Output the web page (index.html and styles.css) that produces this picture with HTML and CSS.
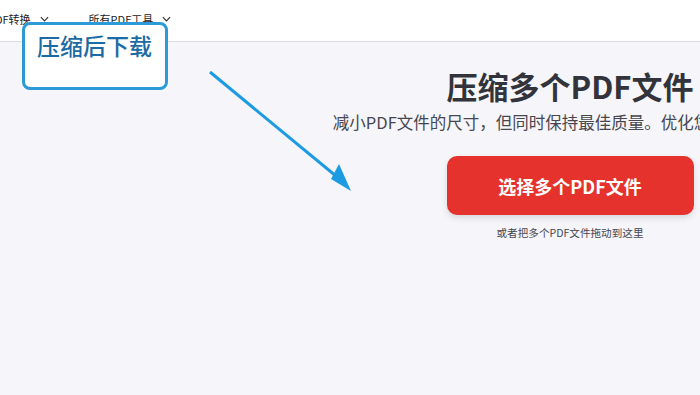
FILE: index.html
```html
<!DOCTYPE html>
<html lang="zh-CN">
<head>
<meta charset="utf-8">
<title>压缩多个PDF文件</title>
<link rel="stylesheet" href="styles.css">
</head>
<body>
<header class="topbar">
  <nav class="nav">
    <a class="nav-item">PDF转换 <svg class="chev" viewBox="0 0 10 6" width="9" height="6"><path d="M1 1l4 4 4-4" fill="none" stroke="#333" stroke-width="1.3"/></svg></a>
    <a class="nav-item">所有PDF工具 <svg class="chev" viewBox="0 0 10 6" width="9" height="6"><path d="M1 1l4 4 4-4" fill="none" stroke="#333" stroke-width="1.3"/></svg></a>
  </nav>
</header>
<main class="hero">
  <h1 class="title">压缩多个PDF文件</h1>
  <p class="subtitle">减小PDF文件的尺寸，但同时保持最佳质量。优化您的PDF文件。</p>
  <button class="upload-btn">选择多个PDF文件</button>
  <p class="drop-hint">或者把多个PDF文件拖动到这里</p>
</main>
<div class="callout">压缩后下载</div>
<svg class="arrow" width="700" height="395" viewBox="0 0 700 395">
  <line x1="210" y1="72" x2="342" y2="181" stroke="#1d9be2" stroke-width="3"/>
  <polygon points="339,164 331,179 351,191" fill="#1d9be2"/>
</svg>
</body>
</html>
```
FILE: styles.css
```css
html, body {
  margin: 0;
  padding: 0;
}
body {
  width: 700px;
  height: 395px;
  overflow: hidden;
  background: #f5f5fa;
  font-family: "Noto Sans CJK SC", "Noto Sans", sans-serif;
  color: #33333b;
  position: relative;
}
.topbar {
  height: 38px;
  padding-bottom: 3px;
  background: #fff;
  border-bottom: 1px solid #dcdce2;
  display: flex;
  align-items: center;
}
.nav {
  display: flex;
  gap: 40px;
  margin-left: -12px;
}
.nav-item {
  font-size: 11px;
  color: #222;
  display: flex;
  align-items: center;
  gap: 9px;
  white-space: nowrap;
}
.chev {
  display: block;
}
.hero {
  width: 1140px;
  display: flex;
  flex-direction: column;
  align-items: center;
  padding-top: 25px;
}
.title {
  margin: 0;
  font-size: 31px;
  line-height: 38px;
  font-weight: 700;
  color: #33333b;
  white-space: nowrap;
}
.subtitle {
  margin: 5px 0 0;
  font-size: 16.5px;
  line-height: 24px;
  font-weight: 400;
  color: #47474f;
  white-space: nowrap;
}
.upload-btn {
  margin-top: 22px;
  width: 247px;
  height: 59px;
  border: none;
  border-radius: 10px;
  background: #e5322d;
  color: #fff;
  font-family: inherit;
  font-size: 18px;
  font-weight: 700;
  box-shadow: 0 3px 6px rgba(0, 0, 0, 0.12);
}
.drop-hint {
  margin: 11px 0 0;
  font-size: 10.6px;
  line-height: 14px;
  color: #47474f;
}
.callout {
  position: absolute;
  left: 22px;
  top: 22px;
  width: 146px;
  height: 68px;
  box-sizing: border-box;
  border: 3px solid #2b9ad6;
  border-radius: 8px;
  background: #fff;
  color: #1b6aa3;
  font-size: 23px;
  font-weight: 500;
  line-height: 30px;
  padding: 5px 0 0 12px;
}
.arrow {
  position: absolute;
  left: 0;
  top: 0;
  pointer-events: none;
}
```
